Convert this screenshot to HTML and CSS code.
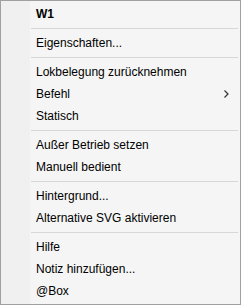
FILE: index.html
```html
<!DOCTYPE html>
<html lang="de">
<head>
  <meta charset="UTF-8" />
  <title>Kontextmenü</title>
  <link rel="stylesheet" href="styles.css">
</head>
<body>

<div class="menu">
  <div class="item title">W1</div>
  <div class="sep"></div>
  <div class="item">Eigenschaften...</div>
  <div class="sep"></div>
  <div class="item">Lokbelegung zurücknehmen</div>
  <div class="item sub">Befehl
    <svg class="arrow" width="5" height="8" viewBox="0 0 5 8"><path d="M0.5 0.5 L4 4 L0.5 7.5" fill="none" stroke="#333" stroke-width="1.2"/></svg>
  </div>
  <div class="item">Statisch</div>
  <div class="sep"></div>
  <div class="item">Außer Betrieb setzen</div>
  <div class="item">Manuell bedient</div>
  <div class="sep"></div>
  <div class="item">Hintergrund...</div>
  <div class="item">Alternative SVG aktivieren</div>
  <div class="sep"></div>
  <div class="item">Hilfe</div>
  <div class="item">Notiz hinzufügen...</div>
  <div class="item">@Box</div>
</div>

</body>
</html>
```

FILE: styles.css
```css
body { margin: 0; padding: 0; background: #fff; }
.menu { width: 239px; height: 299px; border: 1px solid #a0a0a0; padding: 2px 0; background: linear-gradient(to right, #f0f0f0 0, #f0f0f0 29px, #f5f5f5 29px); font-family: "Liberation Sans", Arial, sans-serif; font-size: 12px; color: #000; }
.item { height: 22px; line-height: 22px; padding-left: 35px; position: relative; white-space: nowrap; }
.item.title { font-weight: bold; }
.sep { height: 7px; position: relative; }
.sep::after { content: ""; position: absolute; left: 30px; right: 2px; top: 3px; height: 1px; background: #d7d7d7; }
.arrow { position: absolute; right: 11px; top: 7px; }
```
